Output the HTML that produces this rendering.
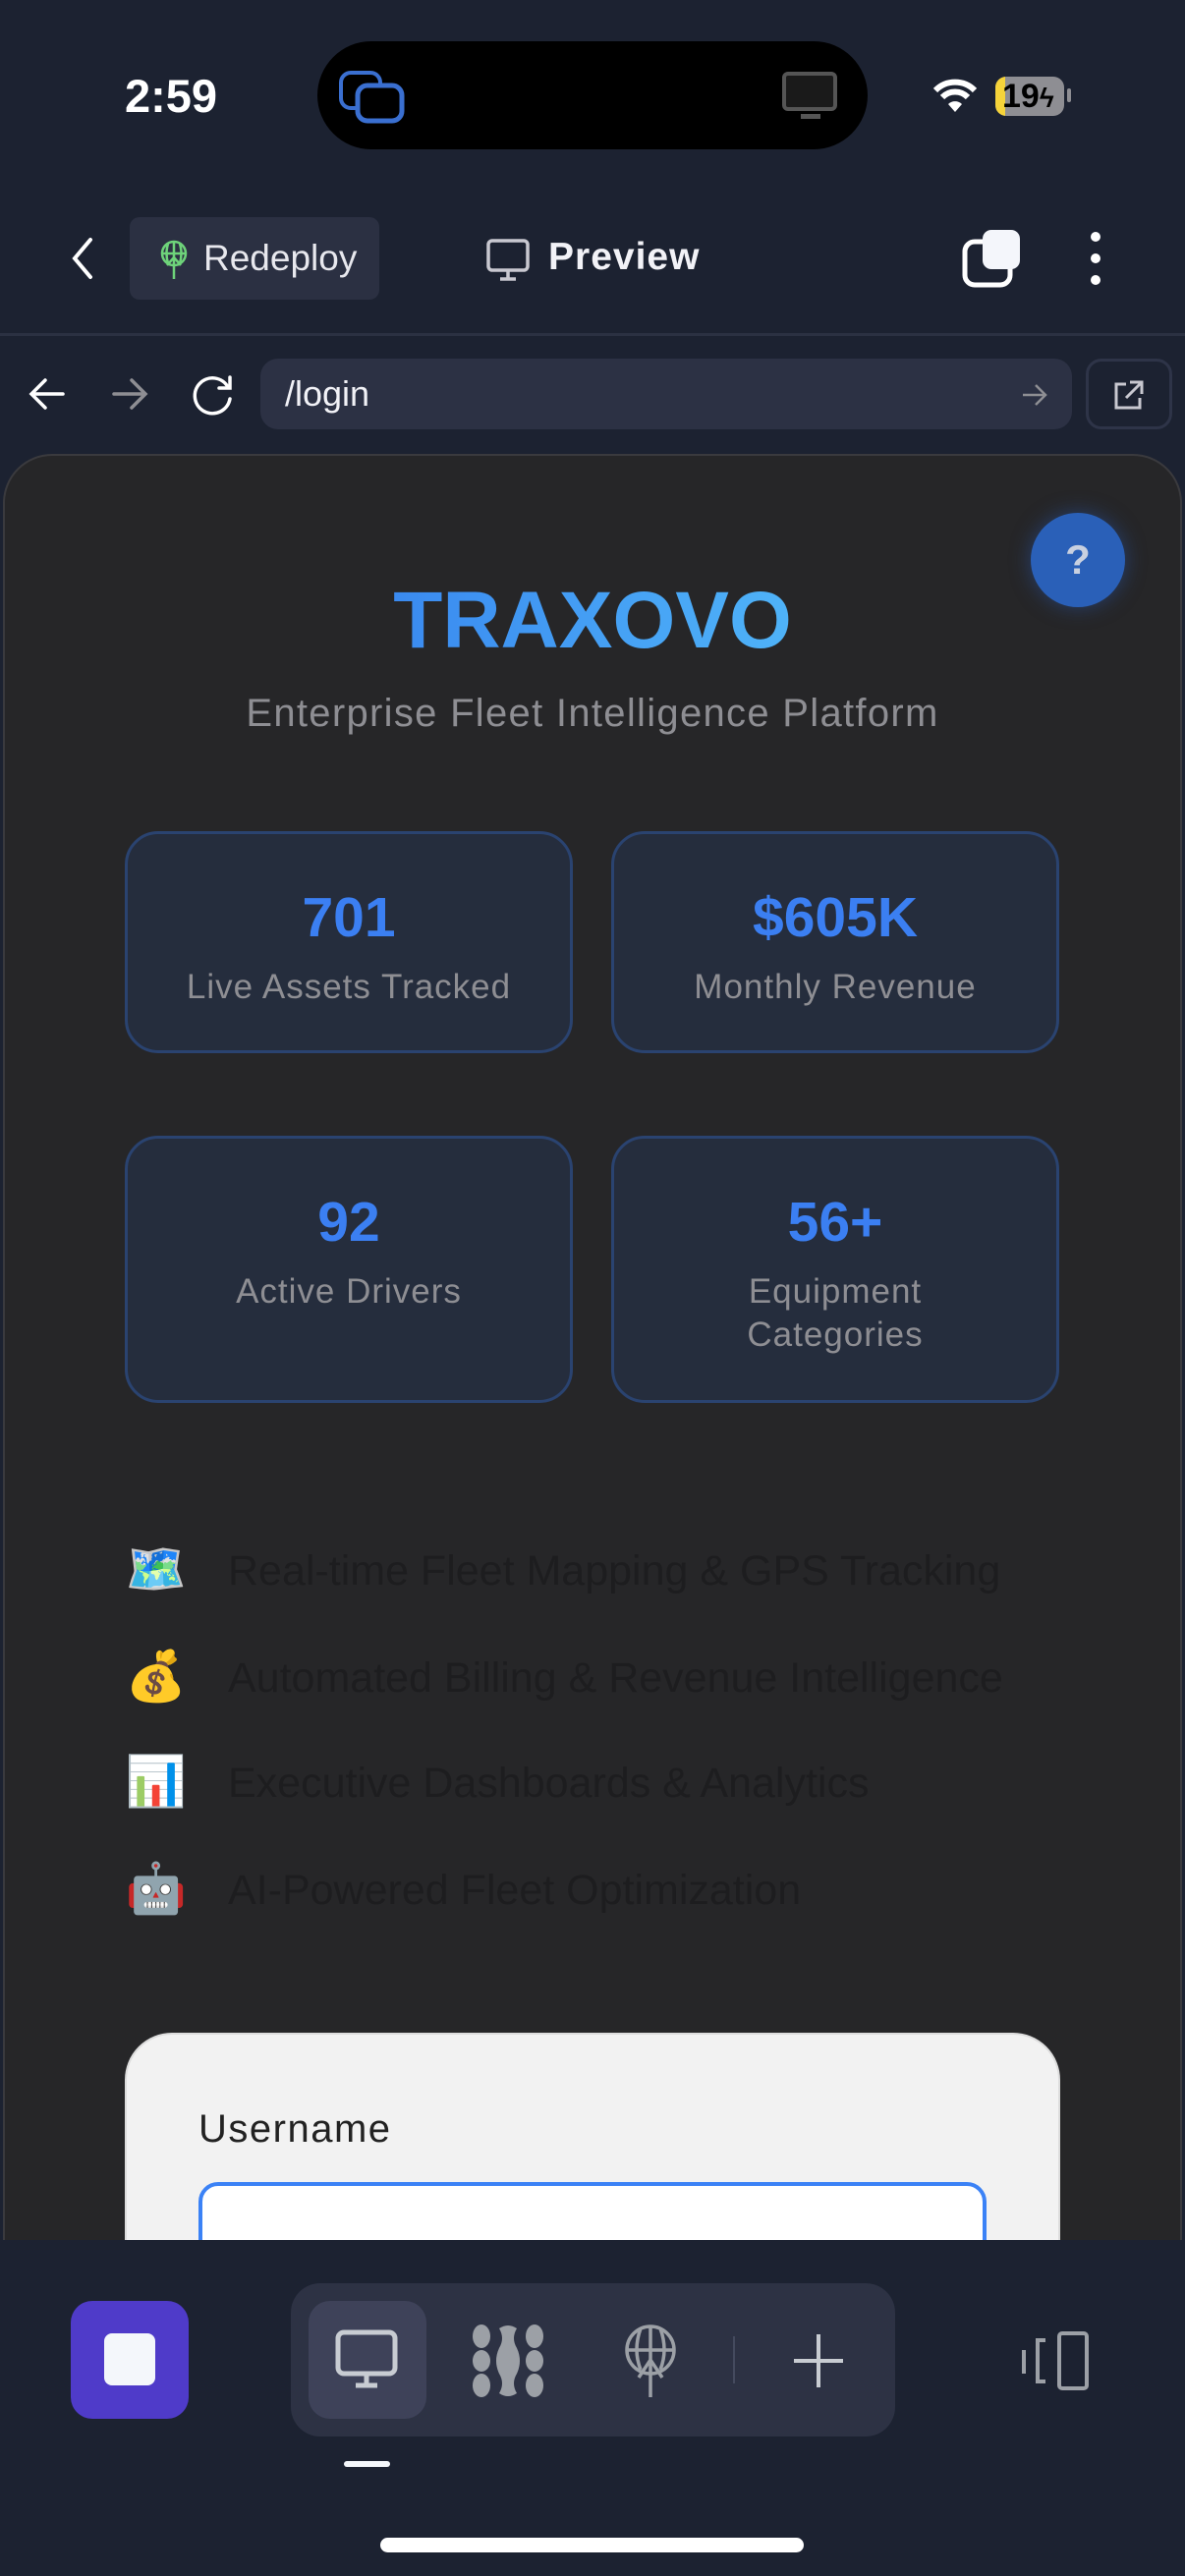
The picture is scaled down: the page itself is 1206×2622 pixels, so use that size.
<!DOCTYPE html>
<html><head><meta charset="utf-8"><style>
*{margin:0;padding:0;box-sizing:border-box}
body{width:1206px;height:2622px;background:#1c2231;font-family:"Liberation Sans",sans-serif;position:relative;overflow:hidden;color:#fff}
.a{position:absolute}
.card{position:absolute;background:#252d3d;border:3px solid #2a4370;border-radius:34px;text-align:center}
.num{font-weight:bold;font-size:57px;color:#3b7ff2;position:absolute;left:0;right:0}
.lbl{font-size:35px;letter-spacing:1px;color:#8e8e93;position:absolute;left:0;right:0;line-height:44px}
.feat{position:absolute;left:232px;font-size:43px;color:#1d1d1f}
.emo{position:absolute;left:127px;font-size:50px;width:64px;text-align:center}
</style></head><body>
<div class="a" style="left:127px;top:70px;font-size:47px;font-weight:bold">2:59</div>
<div class="a" style="left:323px;top:42px;width:560px;height:110px;background:#000;border-radius:55px"></div>
<svg class="a" style="left:345px;top:72px" width="70" height="55" viewBox="0 0 70 55"><rect x="2" y="2" width="40" height="36" rx="10" fill="none" stroke="#3a6fd0" stroke-width="4"/><rect x="19" y="15" width="45" height="36" rx="10" fill="#000" stroke="#3a6fd0" stroke-width="5"/></svg>
<svg class="a" style="left:795px;top:72px" width="60" height="52" viewBox="0 0 60 52"><rect x="3" y="3" width="52" height="36" rx="4" fill="#1a1a1a" stroke="#555" stroke-width="4"/><rect x="20" y="44" width="20" height="5" fill="#555"/></svg>
<svg class="a" style="left:948px;top:78px" width="48" height="40" viewBox="0 0 48 40"><path d="M4 14 A28 28 0 0 1 44 14" stroke="#fff" stroke-width="6" fill="none"/><path d="M11 21 A18 18 0 0 1 37 21" stroke="#fff" stroke-width="6" fill="none"/><path d="M17 28 L24 36 L31 28 A10 10 0 0 0 17 28Z" fill="#fff"/></svg>
<div class="a" style="left:1013px;top:78px;width:70px;height:40px;background:#8e8e93;border-radius:11px;overflow:hidden"><div style="width:10px;height:40px;background:#f5d33a"></div></div>
<div class="a" style="left:1020px;top:78px;font-size:34px;font-weight:bold;color:#000;line-height:40px">19<span style="font-size:28px">ϟ</span></div>
<div class="a" style="left:1086px;top:90px;width:4px;height:14px;background:#8e8e93;border-radius:2px"></div>

<svg class="a" style="left:68px;top:240px" width="30" height="46" viewBox="0 0 30 46"><path d="M24 4 L8 23 L24 42" stroke="#fff" stroke-width="4" fill="none" stroke-linecap="round"/></svg>
<div class="a" style="left:132px;top:221px;width:254px;height:84px;background:#2b3042;border-radius:10px"></div>
<svg class="a" style="left:160px;top:244px" width="34" height="40" viewBox="0 0 34 40"><circle cx="17" cy="14" r="12" fill="none" stroke="#6ed37a" stroke-width="2.5"/><path d="M5 14 H29 M17 2 V40 M11 4 Q8 14 11 24 M23 4 Q26 14 23 24 M10 26 L17 18 L24 26" stroke="#6ed37a" stroke-width="2.5" fill="none"/></svg>
<div class="a" style="left:207px;top:242px;font-size:37px;color:#e8e8ee">Redeploy</div>
<svg class="a" style="left:494px;top:242px" width="46" height="46" viewBox="0 0 46 46"><rect x="3" y="3" width="40" height="30" rx="4" fill="none" stroke="#c8c8d0" stroke-width="3.5"/><path d="M23 33 V41 M15 42 H31" stroke="#c8c8d0" stroke-width="3.5"/></svg>
<div class="a" style="left:558px;top:240px;font-size:39px;font-weight:bold;color:#f2f2f7;letter-spacing:1px">Preview</div>
<svg class="a" style="left:978px;top:232px" width="64" height="62" viewBox="0 0 64 62"><rect x="4" y="14" width="46" height="44" rx="10" fill="none" stroke="#fff" stroke-width="5"/><rect x="22" y="2" width="38" height="40" rx="9" fill="#f4f6fb"/></svg>
<div class="a" style="left:1110px;top:236px;width:10px;height:10px;border-radius:5px;background:#fff"></div>
<div class="a" style="left:1110px;top:258px;width:10px;height:10px;border-radius:5px;background:#fff"></div>
<div class="a" style="left:1110px;top:280px;width:10px;height:10px;border-radius:5px;background:#fff"></div>
<div class="a" style="left:0;top:339px;width:1206px;height:3px;background:#2b3142"></div>

<svg class="a" style="left:28px;top:383px" width="40" height="36" viewBox="0 0 40 36"><path d="M36 18 H5 M18 4 L4 18 L18 32" stroke="#fff" stroke-width="3.5" fill="none" stroke-linecap="round"/></svg>
<svg class="a" style="left:112px;top:383px" width="40" height="36" viewBox="0 0 40 36"><path d="M4 18 H35 M22 4 L36 18 L22 32" stroke="#8e8e93" stroke-width="3.5" fill="none" stroke-linecap="round"/></svg>
<svg class="a" style="left:194px;top:380px" width="46" height="44" viewBox="0 0 46 44"><path d="M38 14 A18 18 0 1 0 40 26" stroke="#fff" stroke-width="3.5" fill="none" stroke-linecap="round"/><path d="M40 4 V15 H29" stroke="#fff" stroke-width="3.5" fill="none" stroke-linecap="round"/></svg>
<div class="a" style="left:265px;top:365px;width:826px;height:72px;background:#2c3144;border-radius:18px"></div>
<div class="a" style="left:290px;top:380px;font-size:36px;color:#f2f2f7">/login</div>
<svg class="a" style="left:1038px;top:388px" width="30" height="28" viewBox="0 0 30 28"><path d="M3 14 H26 M16 4 L26 14 L16 24" stroke="#8e8e93" stroke-width="2.5" fill="none"/></svg>
<div class="a" style="left:1105px;top:365px;width:88px;height:72px;border:3px solid #2e3448;border-radius:16px"></div>
<svg class="a" style="left:1132px;top:385px" width="34" height="34" viewBox="0 0 34 34"><path d="M14 6 H4 V30 H28 V20 M18 4 H30 V16 M30 4 L14 20" stroke="#c8c8d0" stroke-width="3" fill="none"/></svg>

<div class="a" style="left:3px;top:462px;width:1200px;height:1900px;background:#262628;border-radius:50px 50px 0 0;border:2px solid #3a3a3e"></div>
<div class="a" style="left:1049px;top:522px;width:96px;height:96px;border-radius:48px;background:#2a60b8;box-shadow:0 0 20px rgba(40,90,180,.5);text-align:center;line-height:96px;font-size:42px;font-weight:bold;color:#c8d0e0">?</div>
<div class="a" style="left:0;width:1206px;top:585px;text-align:center;font-size:82px;font-weight:bold;"><span style="background:linear-gradient(90deg,#3a8af0,#4fb3f8);-webkit-background-clip:text;color:transparent">TRAXOVO</span></div>
<div class="a" style="left:0;width:1206px;top:704px;text-align:center;font-size:40px;letter-spacing:1.3px;color:#8e8e93">Enterprise Fleet Intelligence Platform</div>

<div class="card" style="left:127px;top:846px;width:456px;height:226px"><div class="num" style="top:52px">701</div><div class="lbl" style="top:134px">Live Assets Tracked</div></div>
<div class="card" style="left:622px;top:846px;width:456px;height:226px"><div class="num" style="top:52px">$605K</div><div class="lbl" style="top:134px">Monthly Revenue</div></div>
<div class="card" style="left:127px;top:1156px;width:456px;height:272px"><div class="num" style="top:52px">92</div><div class="lbl" style="top:134px">Active Drivers</div></div>
<div class="card" style="left:622px;top:1156px;width:456px;height:272px"><div class="num" style="top:52px">56+</div><div class="lbl" style="top:134px">Equipment<br>Categories</div></div>

<div class="emo" style="top:1568px">🗺️</div><div class="feat" style="top:1575px">Real-time Fleet Mapping &amp; GPS Tracking</div>
<div class="emo" style="top:1677px">💰</div><div class="feat" style="top:1684px">Automated Billing &amp; Revenue Intelligence</div>
<div class="emo" style="top:1784px">📊</div><div class="feat" style="top:1791px">Executive Dashboards &amp; Analytics</div>
<div class="emo" style="top:1893px">🤖</div><div class="feat" style="top:1900px">AI-Powered Fleet Optimization</div>

<div class="a" style="left:127px;top:2069px;width:952px;height:300px;background:#f2f2f2;border-radius:48px;border:2px solid #ddd"></div>
<div class="a" style="left:202px;top:2145px;font-size:40px;letter-spacing:1.5px;color:#222">Username</div>
<div class="a" style="left:202px;top:2221px;width:802px;height:120px;background:#fff;border:4px solid #3b82f6;border-radius:20px"></div>

<div class="a" style="left:0;top:2280px;width:1206px;height:342px;background:#1c2231"></div>
<div class="a" style="left:72px;top:2342px;width:120px;height:120px;background:#4f3bc9;border-radius:22px"></div>
<div class="a" style="left:106px;top:2375px;width:52px;height:53px;background:#f4f7fb;border-radius:8px"></div>
<div class="a" style="left:296px;top:2324px;width:615px;height:156px;background:#2d3244;border-radius:30px"></div>
<div class="a" style="left:314px;top:2342px;width:120px;height:120px;background:#3e4259;border-radius:22px"></div>
<svg class="a" style="left:340px;top:2370px" width="68" height="64" viewBox="0 0 68 64"><rect x="4" y="4" width="58" height="42" rx="6" fill="none" stroke="#c8ccd2" stroke-width="5"/><path d="M33 46 V56 M22 58 H44" stroke="#c8ccd2" stroke-width="5"/></svg>
<svg class="a" style="left:480px;top:2366px" width="74" height="74" viewBox="0 0 74 74"><g fill="#9ca0a6"><ellipse cx="10" cy="12" rx="9" ry="12"/><ellipse cx="64" cy="12" rx="9" ry="12"/><ellipse cx="10" cy="62" rx="9" ry="12"/><ellipse cx="64" cy="62" rx="9" ry="12"/><ellipse cx="10" cy="37" rx="9" ry="11"/><ellipse cx="64" cy="37" rx="9" ry="11"/><path d="M28 4 Q37 -2 46 4 Q40 14 46 24 Q52 37 46 50 Q40 60 46 70 Q37 76 28 70 Q34 60 28 50 Q22 37 28 24 Q34 14 28 4Z"/></g></svg>
<svg class="a" style="left:634px;top:2366px" width="56" height="76" viewBox="0 0 56 76"><circle cx="28" cy="26" r="24" fill="none" stroke="#9ca0a6" stroke-width="3.5"/><path d="M4 26 H52 M28 2 V74 M18 4 Q10 26 18 46 M38 4 Q46 26 38 46 M16 54 L28 36 L40 54" stroke="#9ca0a6" stroke-width="3.5" fill="none"/></svg>
<div class="a" style="left:746px;top:2378px;width:2px;height:48px;background:#444a5e"></div>
<svg class="a" style="left:806px;top:2374px" width="54" height="58" viewBox="0 0 54 58"><path d="M27 2 V56 M2 29 H52" stroke="#c8ccd2" stroke-width="4"/></svg>
<svg class="a" style="left:1038px;top:2372px" width="72" height="62" viewBox="0 0 72 62"><rect x="40" y="3" width="28" height="56" rx="3" fill="none" stroke="#9ca0a6" stroke-width="4"/><path d="M26 10 H18 V52 H26" stroke="#9ca0a6" stroke-width="4" fill="none"/><path d="M4 20 V44" stroke="#9ca0a6" stroke-width="4"/></svg>
<div class="a" style="left:350px;top:2505px;width:47px;height:6px;background:#f4f7fb;border-radius:3px"></div>
<div class="a" style="left:387px;top:2583px;width:431px;height:15px;background:#fff;border-radius:8px"></div>
</body></html>
